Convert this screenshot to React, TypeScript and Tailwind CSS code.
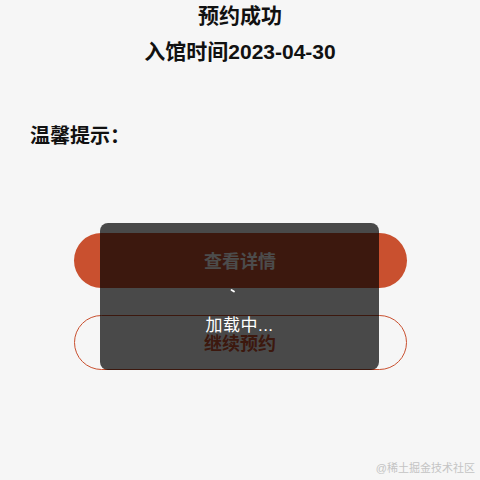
import React from 'react';

const font = { fontFamily: '"Liberation Sans", "Noto Sans CJK SC", sans-serif' };

const App: React.FC = () => {
  return (
    <div className="relative w-[480px] h-[480px] bg-[#f6f6f6] overflow-hidden text-[#111]" style={font}>
      <h1 className="text-center text-[21px] font-bold leading-[32px]">预约成功</h1>
      <p className="mt-[4px] text-center text-[21px] font-bold leading-[32px]">入馆时间2023-04-30</p>
      <p className="mt-[54px] pl-[30px] text-[20px] font-bold leading-[28px]">温馨提示：</p>

      <div className="mt-[83px] flex flex-col items-center gap-[27px]">
        <button className="w-[333px] h-[55px] pt-[3px] rounded-full bg-[#c9502f] text-white text-[18px] font-bold">
          查看详情
        </button>
        <button className="w-[333px] h-[55px] pt-[3px] rounded-full border border-[#c9502f] text-[#c9502f] text-[18px] font-bold">
          继续预约
        </button>
      </div>

      <div className="absolute left-[100px] top-[223px] w-[279px] h-[147px] rounded-[8px] bg-black/70 flex flex-col items-center pt-[60px]">
        <svg width="16" height="16" viewBox="0 0 16 16" className="-ml-[14px]">
          <line x1="6.5" y1="7" x2="9" y2="8.6" stroke="white" strokeWidth="1.8" strokeLinecap="round" />
        </svg>
        <span className="mt-[15px] text-white text-[17px] leading-[24px] tracking-[0.5px]">加载中...</span>
      </div>

      <span className="absolute right-[5px] bottom-[5px] text-[11px] leading-[14px] text-[#c4c4c4]">@稀土掘金技术社区</span>
    </div>
  );
};

export default App;
